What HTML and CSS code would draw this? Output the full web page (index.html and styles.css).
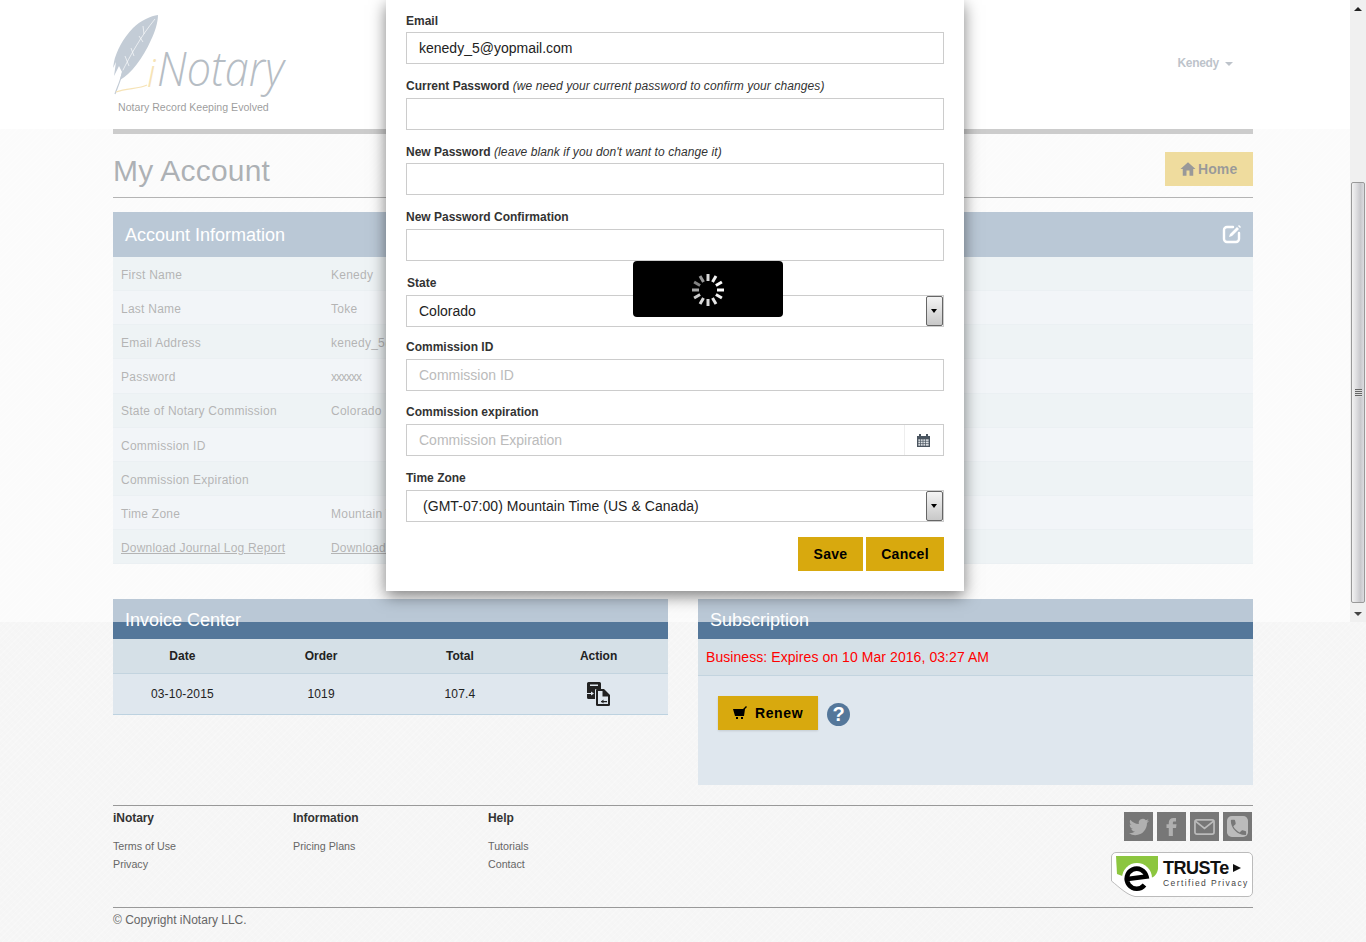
FILE: index.html
```html
<!DOCTYPE html>
<html lang="en">

<head>
    <meta charset="UTF-8">
    <meta name="viewport" content="width=device-width, initial-scale=1.0">
    <title>iNotary - My Account</title>
    <link rel="stylesheet" href="styles.css">
</head>

<body>
    <header class="site-header">
        <div class="container header-inner">
            <a class="logo" href="#">
                <svg class="logo-mark" viewBox="0 0 175 105" width="175" height="105">
                    <path class="feather" d="M45 5C38 6 28 10 20 18 10 28 3 42 1 52L0 58 3 52 1 66 6 56 9 62 7 70C18 64 30 48 38 30 42 22 45 12 45 5Z" />
                    <path class="feather-barb" d="M9 62C17 46 28 26 42 9M18 38 21 46M12 46 16 56M26 26 30 32M30 16 31 24" />
                    <path class="feather-stem" d="M2 84C4 78 8 70 10 60" />
                    <path class="quill-line" d="M3 82C14 78 26 79 34 75" />
                    <text class="logo-i" x="34" y="77">i</text>
                    <text class="logo-word" transform="translate(44 76) scale(0.9 1)">Notary</text>
                </svg>
                <span class="tagline">Notary Record Keeping Evolved</span>
            </a>
            <a class="user-menu" href="#">Kenedy <span class="caret"></span></a>
        </div>
    </header>

    <div class="container">
        <div class="header-rule"></div>
        <div class="page-title">
            <h1>My Account</h1>
            <a class="btn btn-home" href="#">
                <svg viewBox="0 0 24 24" width="18" height="18"><path d="M10 21v-7h4v7h5v-9h3L12 3 2 12h3v9z" /></svg>
                Home
            </a>
        </div>

        <section class="account-panel">
            <div class="panel-bar">
                <h2>Account Information</h2>
                <svg class="edit-icon" viewBox="0 0 20 20" width="20" height="20">
                    <path d="M11 3H5a3 3 0 0 0-3 3v9a3 3 0 0 0 3 3h9a3 3 0 0 0 3-3V9" />
                    <path d="M7 13l1-3 7-7 2 2-7 7zM16 2l1-1 2 2-1 1z" class="edit-pen" />
                </svg>
            </div>
            <div class="info-row"><span>First Name</span><span>Kenedy</span></div>
            <div class="info-row"><span>Last Name</span><span>Toke</span></div>
            <div class="info-row"><span>Email Address</span><span>kenedy_5@yopmail.com</span></div>
            <div class="info-row"><span>Password</span><span class="masked">xxxxxx</span></div>
            <div class="info-row"><span>State of Notary Commission</span><span>Colorado</span></div>
            <div class="info-row"><span>Commission ID</span><span></span></div>
            <div class="info-row"><span>Commission Expiration</span><span></span></div>
            <div class="info-row"><span>Time Zone</span><span>Mountain Time (US &amp; Canada)</span></div>
            <div class="info-row"><a href="#">Download Journal Log Report</a><a href="#">Download</a></div>
        </section>

        <div class="lower-panels">
            <section class="panel">
                <div class="panel-head">Invoice Center</div>
                <div class="invoice-row invoice-head">
                    <span>Date</span><span>Order</span><span>Total</span><span>Action</span>
                </div>
                <div class="invoice-row">
                    <span>03-10-2015</span><span>1019</span><span>107.4</span>
                    <span>
                        <svg viewBox="0 0 23 24" width="23" height="24">
                            <path d="M1.500 0h11A1.500 1.500 0 0 1 14 1.500V7H9a1 1 0 0 0-1 1v9H1.500A1.500 1.500 0 0 1 0 15.500v-14A1.500 1.500 0 0 1 1.500 0z" />
                            <path class="doc-slot" d="M3 2.500h8V4H3zM0 11h4V9.500L7 11.500 4 13.500V12H0z" />
                            <path d="M10 7h7l6 6v9.500a1.500 1.500 0 0 1-1.500 1.500h-11A1.500 1.500 0 0 1 9 22.500V8a1 1 0 0 1 1-1z" />
                            <path class="doc-slot" d="M11 9h4.500v5.500H21v7.500H11z" />
                            <path d="M14 19h6v1.200h-6zM16.500 17.500v4L14 19.600z" />
                        </svg>
                    </span>
                </div>
            </section>

            <section class="panel subscription">
                <div class="panel-head">Subscription</div>
                <div class="expires">Business: Expires on 10 Mar 2016, 03:27 AM</div>
                <div class="renew-area">
                    <a class="btn btn-renew" href="#">
                        <svg viewBox="0 0 14 14" width="14" height="14"><path d="M0 3h10l3-3 1 1-2 2-1 7H2zM3 11h2v2H3zM8 11h2v2H8z" /></svg>
                        Renew
                    </a>
                    <span class="help-dot">?</span>
                </div>
            </section>
        </div>

        <footer class="site-footer">
            <div class="footer-top">
                <div class="footer-col footer-col-a">
                    <h4>iNotary</h4>
                    <a href="#">Terms of Use</a>
                    <a href="#">Privacy</a>
                </div>
                <div class="footer-col footer-col-b">
                    <h4>Information</h4>
                    <a href="#">Pricing Plans</a>
                </div>
                <div class="footer-col">
                    <h4>Help</h4>
                    <a href="#">Tutorials</a>
                    <a href="#">Contact</a>
                </div>
                <div class="footer-right">
                    <div class="social">
                        <a href="#"><svg viewBox="0 0 24 24" width="20" height="20"><path d="M23.953 4.57a10 10 0 01-2.825.775 4.958 4.958 0 002.163-2.723c-.951.555-2.005.959-3.127 1.184a4.92 4.92 0 00-8.384 4.482C7.69 8.095 4.067 6.13 1.64 3.162a4.822 4.822 0 00-.666 2.475c0 1.71.87 3.213 2.188 4.096a4.904 4.904 0 01-2.228-.616v.06a4.923 4.923 0 003.946 4.827 4.996 4.996 0 01-2.212.085 4.936 4.936 0 004.604 3.417 9.867 9.867 0 01-6.102 2.105c-.39 0-.779-.023-1.17-.067a13.995 13.995 0 007.557 2.209c9.053 0 13.998-7.496 13.998-13.985 0-.21 0-.42-.015-.63A9.935 9.935 0 0024 4.59z" /></svg></a>
                        <a href="#"><svg viewBox="5 3 14 22" width="13" height="20"><path d="M14.500 8H17V4h-3c-2.800 0-5 2.200-5 5v2H6.500v4H9v9h4.500v-9H17l.5-4h-4V9c0-.6.4-1 1-1z" /></svg></a>
                        <a href="#"><svg viewBox="0 0 22 18" width="21" height="16" preserveAspectRatio="none"><rect class="mail-box" x="1" y="1" width="20" height="16" rx="2" /><path class="mail-flap" d="M1.500 2.500 11 10.500l9.500-8" /></svg></a>
                        <a href="#"><svg viewBox="0 0 22 22" width="21" height="21"><rect class="phone-box" width="22" height="22" rx="5" /><path class="phone-handset" d="M6.600 10.800c1.400 2.800 3.800 5.100 6.600 6.600l2.200-2.200c.3-.3.7-.4 1-.2l2.600.6c.6 0 1 .4 1 1V19c0 .6-.4 1-1 1C10.600 20 4 12.400 4 5c0-.6.4-1 1-1h2.500c.6 0 1 .4 1 1l.6 2.600c.1.3 0 .7-.2 1z" /></svg></a>
                    </div>
                    <div class="truste">
                        <svg class="truste-mark" viewBox="0 0 142 45" width="142" height="45">
                            <path class="truste-shape" d="M5 .5h132a4.500 4.500 0 0 1 4.500 4.500v35a4.500 4.500 0 0 1-4.500 4.500H24C16 43 8 35 .5 29V5A4.500 4.500 0 0 1 5 .5z" />
                            <path class="truste-green" d="M5 4h42v13c-1 6-5 9-10 10L14 25 6 22z" />
                            <circle class="truste-ring" cx="26" cy="26" r="15" />
                            <path class="truste-e" d="M16.500 27 35.500 24.500A10 10 0 1 0 33.500 33" />
                        </svg>
                        <div class="truste-text">
                            <span class="truste-name">TRUSTe <i class="truste-play"></i></span>
                            <span class="truste-sub">Certified Privacy</span>
                        </div>
                    </div>
                </div>
            </div>
            <div class="copyright">© Copyright iNotary LLC.</div>
        </footer>
    </div>

    <!-- dimmed layer, only covers the height of the window it was opened in -->
    <div class="overlay"></div>

    <div class="modal">
        <form>
            <div class="field field-short">
                <label>Email</label>
                <input type="text" value="kenedy_5@yopmail.com">
            </div>
            <div class="field field-wide">
                <label>Current Password <em>(we need your current password to confirm your changes)</em></label>
                <input type="password">
            </div>
            <div class="field field-short">
                <label>New Password <em>(leave blank if you don't want to change it)</em></label>
                <input type="password">
            </div>
            <div class="field field-wide">
                <label>New Password Confirmation</label>
                <input type="password">
            </div>
            <div class="field field-state">
                <label>State</label>
                <div class="select-wrap">
                    <select><option>Colorado</option></select>
                    <span class="select-arrow"></span>
                </div>
            </div>
            <div class="field">
                <label>Commission ID</label>
                <input type="text" placeholder="Commission ID">
            </div>
            <div class="field field-wide">
                <label>Commission expiration</label>
                <div class="date-wrap">
                    <input type="text" placeholder="Commission Expiration">
                    <span class="date-addon">
                        <svg viewBox="0 0 13 13" width="13" height="13">
                            <path class="cal-body" d="M0 2h2V0h2v2h5V0h2v2h2v11H0z" />
                            <path class="cal-grid" d="M1 5h11v7H1zM3.500 5v7M6 5v7M8.500 5v7M1 7.300h11M1 9.600h11" />
                        </svg>
                    </span>
                </div>
            </div>
            <div class="field field-wide">
                <label>Time Zone</label>
                <div class="select-wrap select-tz">
                    <select><option>(GMT-07:00) Mountain Time (US &amp; Canada)</option></select>
                    <span class="select-arrow"></span>
                </div>
            </div>
            <div class="modal-actions">
                <button type="button" class="btn-save">Save</button>
                <button type="button" class="btn-cancel">Cancel</button>
            </div>
        </form>
    </div>

    <div class="loading">
        <svg viewBox="0 0 40 40" width="40" height="40">
            <g class="spokes">
                <path d="M20 4v7" opacity="0.85" />
                <path d="M28 6.100l-3.500 6" opacity="0.95" />
                <path d="M33.900 12l-6 3.500" opacity="1" />
                <path d="M36 20h-7" opacity="1" />
                <path d="M33.900 28l-6-3.500" opacity="0.95" />
                <path d="M28 33.900l-3.500-6" opacity="0.9" />
                <path d="M20 36v-7" opacity="0.85" />
                <path d="M12 33.900l3.500-6" opacity="0.85" />
                <path d="M6.100 28l6-3.500" opacity="0.8" />
                <path d="M4 20h7" opacity="0.65" />
                <path d="M6.100 12l6 3.500" opacity="0.5" />
                <path d="M12 6.100l3.500 6" opacity="0.6" />
            </g>
        </svg>
    </div>

    <div class="scrollbar">
        <span class="scroll-btn"><i class="arrow-up"></i></span>
        <div class="scroll-track">
            <div class="scroll-thumb"><span class="grip"></span></div>
        </div>
        <span class="scroll-btn"><i class="arrow-down"></i></span>
    </div>
</body>

</html>
```

FILE: styles.css
```css
* {
    box-sizing: border-box;
}

html,
body {
    height: 942px;
    overflow: hidden;
}

body {
    position: relative;
    margin: 0;
    font-family: "Liberation Sans", Arial, sans-serif;
    font-size: 12px;
    color: #333;
    background-color: #f6f6f6;
    background-image:
        repeating-linear-gradient(45deg, rgba(0, 0, 0, 0.005) 0 2px, transparent 2px 5px),
        repeating-linear-gradient(-45deg, rgba(255, 255, 255, 0.25) 0 1px, transparent 1px 4px);
}

a {
    color: inherit;
    text-decoration: none;
}

.container {
    width: 1140px;
    margin: 0 auto;
}

/* header */
.site-header {
    height: 129px;
    background: white;
}

.header-inner {
    display: flex;
    justify-content: space-between;
    align-items: flex-start;
    height: 129px;
}

.logo {
    display: block;
    position: relative;
    width: 175px;
    height: 115px;
    margin-top: 10px;
}

.logo-mark {
    display: block;
}

.feather {
    fill: #697f98;
}

.feather-barb {
    fill: none;
    stroke: #f4f6f8;
    stroke-width: 1;
    opacity: 0.7;
}

.feather-stem {
    fill: none;
    stroke: #697f98;
    stroke-width: 1.2;
}

.quill-line {
    fill: none;
    stroke: #e8b94a;
    stroke-width: 1.2;
}

.logo-i {
    font-family: "Open Sans", sans-serif;
    font-style: italic;
    font-weight: 300;
    font-size: 38px;
    fill: #e8b94a;
}

.logo-word {
    font-family: "Open Sans", sans-serif;
    font-style: italic;
    font-weight: 300;
    font-size: 48px;
    fill: #4a5a6c;
}

.tagline {
    position: absolute;
    left: 5px;
    top: 91px;
    font-size: 10.6px;
    white-space: nowrap;
    color: black;
}

.user-menu {
    margin: 56px 20px 0 0;
    font-weight: bold;
    letter-spacing: -0.3px;
    color: #5a6a7c;
}

.caret {
    display: inline-block;
    margin-left: 3px;
    vertical-align: middle;
    border-top: 4px solid #5a6a7c;
    border-left: 4px solid transparent;
    border-right: 4px solid transparent;
}

.header-rule {
    height: 5px;
    background: #808080;
}

/* title */
.page-title {
    display: flex;
    justify-content: space-between;
    align-items: flex-start;
    height: 64px;
    padding-top: 19px;
    border-bottom: 1px solid #444;
}

h1 {
    margin: 0;
    font-size: 30px;
    font-weight: normal;
    line-height: 36px;
    letter-spacing: 0.2px;
    color: #333d47;
}

.btn {
    display: flex;
    align-items: center;
    font-weight: bold;
    color: black;
    background-color: #d8a90e;
}

.btn-home {
    gap: 1px;
    width: 88px;
    height: 34px;
    padding-left: 14px;
    margin-top: -1px;
    font-size: 14px;
    letter-spacing: 0.1px;
}

/* account table */
.account-panel {
    margin-top: 14px;
}

.panel-bar {
    display: flex;
    justify-content: space-between;
    align-items: center;
    height: 45px;
    padding: 1px 11px 0 12px;
    background-color: #54779a;
}

.panel-bar h2 {
    margin: 0;
    font-size: 18px;
    font-weight: normal;
    color: white;
}

.edit-icon {
    margin-top: -3px;
}

.edit-icon path {
    fill: none;
    stroke: white;
    stroke-width: 2.4;
    stroke-linecap: round;
}

.edit-icon .edit-pen {
    fill: white;
    stroke: none;
}

.info-row {
    display: grid;
    grid-template-columns: 210px 1fr;
    align-items: center;
    height: 34.125px;
    padding: 2.7px 0 0 8px;
    color: #444;
    letter-spacing: 0.25px;
    background-color: #dfe7ee;
    border-bottom: 1px solid #ced9e2;
}

.info-row:nth-of-type(even) {
    background-color: #d5e0e7;
}

.info-row a {
    text-decoration: underline;
    letter-spacing: 0.2px;
}

.masked {
    letter-spacing: -1px;
}

/* invoice + subscription */
.lower-panels {
    display: grid;
    grid-template-columns: 555px 555px;
    justify-content: space-between;
    margin-top: 35px;
}

.panel-head {
    height: 40px;
    padding: 10px 12px 0;
    font-size: 18px;
    line-height: 22px;
    color: white;
    background-color: #54779a;
}

.invoice-row {
    display: grid;
    grid-template-columns: repeat(4, 1fr);
    align-items: center;
    height: 41px;
    text-align: center;
    letter-spacing: 0.15px;
    color: #222;
    background-color: #dfe7ee;
    border-bottom: 1px solid #bdd2e0;
}

.invoice-head {
    height: 35px;
    font-weight: bold;
    letter-spacing: 0;
    background-color: #d5e0e7;
    border-bottom: 1px solid #c3d4df;
}

.invoice-row svg {
    display: block;
    margin: 0 auto;
    fill: #222;
}

.invoice-row .doc-slot {
    fill: #dfe7ee;
}

.subscription {
    height: 186px;
    background-color: #dfe7ee;
}

.expires {
    height: 37px;
    padding: 0 8px;
    font-size: 14px;
    line-height: 36px;
    letter-spacing: 0.07px;
    color: red;
    background-color: #d5e0e7;
    border-bottom: 1px solid #c3d4df;
}

.renew-area {
    display: flex;
    align-items: center;
    gap: 9px;
    padding: 20px 0 0 20px;
}

.btn-renew {
    gap: 8px;
    width: 100px;
    height: 34px;
    padding-left: 15px;
    font-size: 14px;
    letter-spacing: 0.6px;
    box-shadow: 0 1px 2px rgba(0, 0, 0, 0.12);
}

.help-dot {
    width: 23px;
    height: 23px;
    margin-top: 2px;
    font-size: 20px;
    font-weight: bold;
    line-height: 23px;
    text-align: center;
    color: white;
    background-color: #54779a;
    border-radius: 50%;
}

/* footer */
.site-footer {
    margin-top: 20px;
    border-top: 1px solid #999;
}

.footer-top {
    display: flex;
    height: 102px;
    padding-top: 5px;
    border-bottom: 1px solid #999;
}

.footer-col {
    display: flex;
    flex-direction: column;
    align-items: flex-start;
    font-size: 10.7px;
    line-height: 18px;
    color: #666;
}

.footer-col-a {
    width: 180px;
}

.footer-col-b {
    width: 195px;
}

.footer-col h4 {
    margin: 0 0 12px;
    font-size: 12px;
    line-height: 14px;
    letter-spacing: -0.05px;
    color: #333;
}

.footer-right {
    display: flex;
    flex-direction: column;
    align-items: flex-end;
    gap: 11px;
    margin-left: auto;
    padding-top: 1px;
}

.social {
    display: flex;
    gap: 4px;
    margin-right: 1px;
}

.social a {
    display: flex;
    align-items: center;
    justify-content: center;
    width: 29px;
    height: 29px;
    background-color: #777;
}

.social svg {
    fill: #b0b0b0;
}

.social .mail-box,
.social .mail-flap {
    fill: none;
    stroke: #bbb;
    stroke-width: 1.8;
}

.social .phone-box {
    fill: #bbb;
}

.social .phone-handset {
    fill: #777;
}

.truste {
    position: relative;
    width: 142px;
    height: 45px;
}

.truste-mark {
    display: block;
}

.truste-shape {
    fill: white;
    stroke: #bbb;
}

.truste-green {
    fill: #8cc63f;
}

.truste-ring {
    fill: white;
}

.truste-e {
    fill: none;
    stroke: black;
    stroke-width: 4.6;
}

.truste-text {
    position: absolute;
    top: 7px;
    left: 52px;
    display: flex;
    flex-direction: column;
}

.truste-name {
    font-size: 18px;
    font-weight: bold;
    line-height: 19px;
    letter-spacing: -0.5px;
    color: #111;
    white-space: nowrap;
}

.truste-play {
    display: inline-block;
    margin-bottom: 2px;
    border-left: 8px solid #111;
    border-top: 4.5px solid transparent;
    border-bottom: 4.5px solid transparent;
}

.truste-sub {
    font-size: 8.5px;
    line-height: 11px;
    letter-spacing: 1.4px;
    color: #444;
    white-space: nowrap;
}

.copyright {
    padding-top: 5px;
    color: #666;
}

/* overlay, modal and the things lying over the page */
.overlay {
    position: absolute;
    top: 0;
    left: 0;
    right: 0;
    height: 622px;
    background: rgba(255, 255, 255, 0.6);
}

.modal {
    position: absolute;
    top: 0;
    left: 386px;
    width: 578px;
    height: 591px;
    padding: 14px 20px 0;
    background: white;
    box-shadow: 0 5px 15px rgba(0, 0, 0, 0.5);
}

.field {
    height: 65px;
}

.field-wide {
    height: 66px;
}

.field label {
    display: block;
    height: 19px;
    font-weight: bold;
    line-height: 14px;
    color: #333;
}

.field-short label {
    height: 18px;
}

.field em {
    font-weight: normal;
    letter-spacing: 0.09px;
}

.field-state {
    height: 64px;
}

.field-state label {
    padding-left: 1px;
}

.field input,
.field select {
    display: block;
    width: 100%;
    height: 32px;
    padding: 0 12px;
    font-family: inherit;
    font-size: 14px;
    color: #222;
    background: white;
    border: 1px solid #ccc;
    border-radius: 0;
    outline: none;
    appearance: none;
}

.field input::placeholder {
    color: #bbb;
}

.select-wrap,
.date-wrap {
    position: relative;
}

.select-tz select {
    padding-left: 16px;
    letter-spacing: 0.05px;
}

.select-arrow {
    position: absolute;
    top: 1px;
    right: 1px;
    width: 17px;
    height: 30px;
    background: linear-gradient(#f4f4f4, #c8c8c8);
    border: 1px solid #666;
    border-radius: 2px;
}

.select-arrow::after {
    content: "";
    position: absolute;
    top: 12px;
    left: 4px;
    border-top: 4px solid black;
    border-left: 3.5px solid transparent;
    border-right: 3.5px solid transparent;
}

.date-addon {
    position: absolute;
    top: 1px;
    right: 1px;
    display: flex;
    align-items: center;
    justify-content: center;
    width: 39px;
    height: 30px;
    padding-right: 2px;
    border-left: 1px solid #eee;
}

.cal-body {
    fill: #4a5560;
}

.cal-grid {
    fill: #dfe3e7;
    stroke: #4a5560;
    stroke-width: 0.7;
}

.modal-actions {
    display: flex;
    justify-content: flex-end;
    gap: 3px;
}

.modal-actions button {
    height: 34px;
    padding: 0;
    font-family: inherit;
    font-size: 14px;
    font-weight: bold;
    letter-spacing: 0.3px;
    color: black;
    background-color: #d8a90e;
    border: none;
    cursor: pointer;
}

.modal-actions .btn-save {
    width: 65px;
}

.modal-actions .btn-cancel {
    width: 78px;
}

.loading {
    position: absolute;
    top: 261px;
    left: 633px;
    display: flex;
    align-items: center;
    justify-content: center;
    width: 150px;
    height: 56px;
    padding-top: 2px;
    background: black;
    border-radius: 4px;
}

.spokes path {
    fill: none;
    stroke: white;
    stroke-width: 3;
}

.scrollbar {
    position: absolute;
    top: 0;
    right: 0;
    display: flex;
    flex-direction: column;
    width: 16px;
    height: 622px;
    background: #f0f0f0;
}

.scroll-btn {
    display: flex;
    flex: none;
    align-items: center;
    justify-content: center;
    height: 17px;
}

.arrow-up {
    border-bottom: 4px solid #222;
    border-left: 4px solid transparent;
    border-right: 4px solid transparent;
}

.arrow-down {
    border-top: 4px solid #444;
    border-left: 4px solid transparent;
    border-right: 4px solid transparent;
}

.scroll-track {
    flex: 1;
    padding-top: 165px;
}

.scroll-thumb {
    display: flex;
    align-items: center;
    justify-content: center;
    height: 421px;
    margin: 0 1px;
    background: linear-gradient(90deg, #f2f2f2, #e2e2e4 30%, #c8c8cc 70%, #dcdce0);
    border: 1px solid #999;
    border-radius: 2px;
}

.grip {
    width: 7px;
    height: 8px;
    background: repeating-linear-gradient(#666 0 1px, #ddd 1px 2px);
}
```
